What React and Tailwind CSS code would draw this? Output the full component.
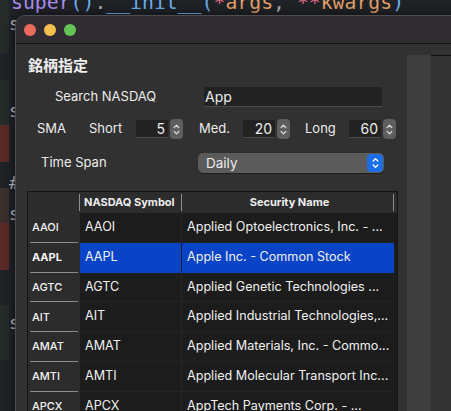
import React from "react";

const Chevrons = ({ color = "#e6e6e6", w = 7, h = 14 }) => (
  <svg width={w} height={h} viewBox="0 0 7 14" fill="none" stroke={color} strokeWidth="1.3" strokeLinecap="round" strokeLinejoin="round">
    <path d="M1.2 5 L3.5 2.6 L5.8 5" />
    <path d="M1.2 9 L3.5 11.4 L5.8 9" />
  </svg>
);

const Stepper = () => (
  <div className="w-[13px] h-[20px] rounded-[4px] bg-[#5e5e5e] flex items-center justify-center">
    <Chevrons color="#d8d8d8" w={7} h={15} />
  </div>
);

const NumField = ({ v }) => (
  <div className="w-[32px] h-[18px] bg-[#222222] border-b border-[#4a4a4a] flex items-center justify-end pr-[3px] text-[14px] text-[#ececec] leading-none">
    {v}
  </div>
);

const gutter = [
  { h: 53, bg: "#262c2a", ch: "s", chTop: 15 },
  { h: 27, bg: "#1f2226", ch: "" },
  { h: 45, bg: "#252c29", ch: "s", chTop: 22 },
  { h: 37, bg: "#5a2b29", ch: "" },
  { h: 26, bg: "#1f2226", ch: "#", chTop: 12 },
  { h: 35, bg: "#3a302d", ch: "s", chTop: 17 },
  { h: 47, bg: "#5a2b29", ch: "" },
  { h: 35, bg: "#1f2226", ch: "" },
  { h: 55, bg: "#252c29", ch: "s", chTop: 9 },
  { h: 60, bg: "#1f2226", ch: "" },
];

const rows = [
  ["AAOI", "Applied Optoelectronics, Inc. - ..."],
  ["AAPL", "Apple Inc. - Common Stock", true],
  ["AGTC", "Applied Genetic Technologies ..."],
  ["AIT", "Applied Industrial Technologies,..."],
  ["AMAT", "Applied Materials, Inc. - Commo..."],
  ["AMTI", "Applied Molecular Transport Inc..."],
  ["APCX", "AppTech Payments Corp. - ..."],
];

export default function App() {
  const ui = { fontFamily: "Inter, 'Noto Sans CJK JP', sans-serif" };
  return (
    <div className="relative w-[451px] h-[411px] overflow-hidden bg-[#1f2226]" style={ui}>
      {/* editor background */}
      <div className="flex flex-col">
        <div className="flex h-[15px]">
          <div className="w-[9px] bg-[#262c2a]" />
          <div
            className="pl-[2px] -mt-[7px] text-[19.8px] leading-[20px] whitespace-nowrap"
            style={{ fontFamily: "'DejaVu Sans Mono', monospace" }}
          >
            <span className="text-[#b08cf0]">super</span>
            <span className="text-[#6fb0f0]">()</span>
            <span className="text-[#a9adb5]">.</span>
            <span className="text-[#6fb0f0]">__init__(</span>
            <span className="text-[#ea6f8a]">*</span>
            <span className="text-[#e3a06a]">args</span>
            <span className="text-[#a9adb5]">, </span>
            <span className="text-[#ea6f8a]">**</span>
            <span className="text-[#e3a06a]">kwargs</span>
            <span className="text-[#6fb0f0]">)</span>
          </div>
        </div>
        {gutter.map((g, i) => (
          <div key={i} className="flex" style={{ height: i === 0 ? g.h - 15 : g.h }}>
            <div className="w-[9px]" style={{ background: g.bg }} />
            <div
              className="relative w-[8px] text-[18px] leading-none text-[#b9bdc4]"
              style={{ fontFamily: "'DejaVu Sans Mono', monospace", paddingTop: i === 0 ? 0 : g.chTop ?? 0 }}
            >
              {g.ch}
            </div>
          </div>
        ))}
      </div>

      {/* window */}
      <div className="absolute left-[15px] top-[15px] w-[460px] h-[420px] rounded-tl-[10px] border border-[#4d4d4f] bg-[#313131] shadow-[0_0_12px_rgba(0,0,0,0.6)] overflow-hidden flex flex-col">
        {/* title bar */}
        <div className="h-[28px] shrink-0 bg-[#2f2d32] border-b border-[#141414] flex items-center gap-[8px] pl-[8px]">
          <div className="w-[12px] h-[12px] rounded-full bg-[#ec6a5e]" />
          <div className="w-[12px] h-[12px] rounded-full bg-[#f4bf4f]" />
          <div className="w-[12px] h-[12px] rounded-full bg-[#61c554]" />
        </div>

        <div className="flex flex-1">
          {/* main panel */}
          <div className="w-[391px] shrink-0 flex flex-col text-[#ececec]">
            <div className="mt-[12px] ml-[12px] h-[20px] text-[15px] leading-[20px] font-semibold">銘柄指定</div>

            {/* search row */}
            <div className="mt-[10px] h-[22px] flex items-center text-[13px]">
              <div className="w-[188px] pl-[39px]">Search NASDAQ</div>
              <div className="w-[178px] h-[20px] bg-[#222222] border-b border-[#4a4a4a] flex items-center pl-[1px] text-[14px]">
                App
              </div>
            </div>

            {/* SMA row */}
            <div className="mt-[10px] h-[22px] flex items-center text-[13px]">
              <div className="w-[73px] pl-[21px]">SMA</div>
              <div className="w-[47px]">Short</div>
              <NumField v="5" />
              <div className="w-[2px]" />
              <Stepper />
              <div className="w-[16px]" />
              <div className="w-[44px]">Med.</div>
              <NumField v="20" />
              <div className="w-[2px]" />
              <Stepper />
              <div className="w-[15px]" />
              <div className="w-[44px]">Long</div>
              <NumField v="60" />
              <div className="w-[2px]" />
              <Stepper />
            </div>

            {/* time span row */}
            <div className="mt-[12px] h-[22px] flex items-center text-[13px]">
              <div className="w-[182px] pl-[25px]">Time Span</div>
              <div className="w-[186px] h-[20px] rounded-[5px] bg-[#5b5b5b] flex items-center justify-between pl-[8px] pr-[1px] shadow-[0_0.5px_1px_rgba(0,0,0,0.4)]">
                <span className="text-[13.5px] text-[#ededed]">Daily</span>
                <div className="w-[16px] h-[18px] rounded-[4px] bg-[#1c6ee6] flex items-center justify-center">
                  <Chevrons color="#ffffff" w={7} h={14} />
                </div>
              </div>
            </div>

            {/* table */}
            <div className="mt-[17px] ml-[11px] w-[371px] flex-1 border border-[#151515] bg-[#1c1c1c] flex flex-col">
              <div className="h-[21px] shrink-0 flex bg-[#2c2c2c] text-[11px] font-bold text-[#ececec]">
                <div className="w-[52px] border-r border-[#8f8f8f] my-[2px]" />
                <div className="w-[102px] flex items-center pl-[4px] border-r border-[#8f8f8f] my-[2px]">NASDAQ Symbol</div>
                <div className="w-[212px] flex items-center justify-center pl-[4px] border-r border-[#8f8f8f] my-[2px]">Security Name</div>
              </div>
              {rows.map(([sym, name, sel]) => (
                <div key={sym} className="h-[29.8px] shrink-0 flex">
                  <div className="w-[52px] shrink-0 bg-[#2c2c2c] flex flex-col">
                    <div className={"flex-1 flex items-center pl-[4px] text-[11px] text-[#f2f2f2] " + (sel ? "font-bold" : "font-medium")}>{sym}</div>
                    <div className="mx-[2px] h-[1px] bg-[#8d8d8d]" />
                  </div>
                  <div className={"w-[102px] shrink-0 flex items-center pl-[5px] text-[12.6px] text-[#f0f0f0] border-r border-b " + (sel ? "bg-[#0a44c6] border-r-[#1c1c1c] border-b-[#0a44c6]" : "border-r-[#252525] border-b-[#242424]")}>
                    {sym}
                  </div>
                  <div className={"w-[212px] shrink-0 flex items-center pl-[5px] text-[12.6px] text-[#f0f0f0] whitespace-nowrap overflow-hidden border-b " + (sel ? "bg-[#0a44c6] border-b-[#0a44c6]" : "border-b-[#242424]")}>
                    {name}
                  </div>
                </div>
              ))}
            </div>
          </div>

          {/* right side */}
          <div className="w-[24px] shrink-0 mt-[11px] bg-[#3e3e3e]" />
          <div className="flex-1 mt-[11px] border-t border-[#0e0e0e] bg-[#333333]" />
        </div>
      </div>
    </div>
  );
}
